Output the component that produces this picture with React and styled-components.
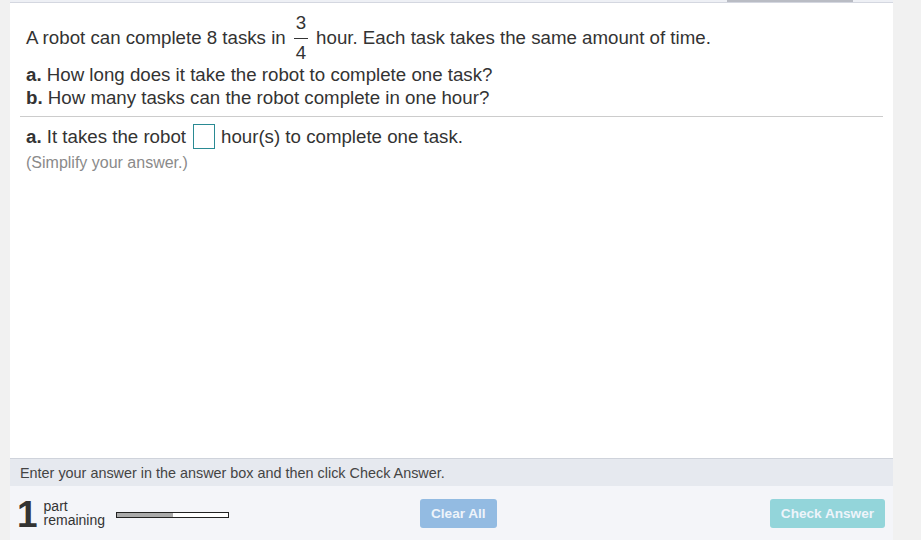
import React from 'react';
import styled, { createGlobalStyle } from 'styled-components';

const GlobalStyle = createGlobalStyle`
  body {
    margin: 0;
    background: #f2f2f2;
    font-family: 'Liberation Sans', Arial, sans-serif;
    color: #333;
  }
`;

const Page = styled.div`
  display: flex;
  height: 540px;
  width: 921px;
  overflow: hidden;
`;

const SideStrip = styled.div`
  width: ${p => p.$w}px;
  flex-shrink: 0;
  background: #f1f1f1;
`;

const Main = styled.div`
  width: 883px;
  display: flex;
  flex-direction: column;
  background: #fff;
`;

const TopBar = styled.div`
  height: 2px;
  background: #eef0f5;
  border-bottom: 1px solid #d4d7e0;
  display: flex;
  justify-content: flex-end;
  padding-right: 40px;
`;

const Tab = styled.div`
  width: 126px;
  height: 2px;
  background: #b9bcc4;
`;

const Content = styled.div`
  flex: 1;
  padding: 10px 10px 0 10px;
  font-size: 18.7px;
`;

const Question = styled.div`
  padding: 0 6px 7px;
`;

const Stem = styled.div`
  display: flex;
  align-items: center;
  height: 50px;
`;

const Frac = styled.span`
  display: inline-flex;
  flex-direction: column;
  align-items: center;
  margin: 0 8px;
  line-height: 22px;
  & > span:first-child {
    border-bottom: 1px solid #333;
    padding: 0 2px 4px;
    margin-bottom: 3px;
  }
`;

const Line = styled.div`
  line-height: 23px;
`;

const Part = styled.b`
  font-weight: 700;
`;

const Divider = styled.hr`
  border: 0;
  border-top: 1px solid #ccc;
  margin: 0;
`;

const Answer = styled.div`
  padding: 6px 6px 0;
`;

const AnswerLine = styled.div`
  display: flex;
  align-items: center;
  height: 27px;
`;

const Box = styled.span`
  display: inline-block;
  width: 20px;
  height: 23px;
  border: 1px solid #2a8a93;
  margin: 0 6px 0 7px;
`;

const Hint = styled.div`
  color: #8a8a8a;
  font-size: 16px;
  margin-top: 4px;
`;

const Instruction = styled.div`
  height: 27px;
  border-top: 1px solid #cfd3db;
  background: #e6e9ef;
  font-size: 14.4px;
  color: #444;
  display: flex;
  align-items: center;
  padding-left: 10px;
`;

const Footer = styled.div`
  height: 54px;
  background: #f4f5f9;
  display: flex;
  align-items: center;
  padding: 0 8px 0 7px;
`;

const Remaining = styled.div`
  display: flex;
  align-items: center;
  width: 403px;
`;

const Count = styled.span`
  font-size: 37px;
  font-weight: 700;
  color: #333;
  line-height: 1;
  margin-right: 6px;
  margin-top: 3px;
`;

const Label = styled.span`
  display: flex;
  flex-direction: column;
  font-size: 14px;
  line-height: 14.5px;
  color: #333;
  white-space: nowrap;
`;

const Progress = styled.div`
  width: 111px;
  height: 4px;
  border: 1px solid #222;
  background: #fff;
  margin-left: 11px;
  margin-top: 3px;
`;

const Fill = styled.div`
  height: 100%;
  background: #aaa;
`;

const Button = styled.button`
  border: 0;
  border-radius: 3px;
  height: 29px;
  padding: 0 11px;
  font-family: 'Liberation Sans', Arial, sans-serif;
  font-size: 13.6px;
  font-weight: 700;
  color: #eef4fa;
  background: ${p => p.$bg};
`;

const Spacer = styled.div`
  flex: 1;
`;

export default function App() {
  return (
    <Page>
      <GlobalStyle />
      <SideStrip $w={10} />
      <Main>
        <TopBar><Tab /></TopBar>
        <Content>
          <Question>
            <Stem>
              A robot can complete 8 tasks in
              <Frac><span>3</span><span>4</span></Frac>
              hour. Each task takes the same amount of time.
            </Stem>
            <Line><Part>a.</Part> How long does it take the robot to complete one task?</Line>
            <Line><Part>b.</Part> How many tasks can the robot complete in one hour?</Line>
          </Question>
          <Divider />
          <Answer>
            <AnswerLine>
              <Part>a.</Part>&nbsp;It takes the robot
              <Box />
              hour(s) to complete one task.
            </AnswerLine>
            <Hint>(Simplify your answer.)</Hint>
          </Answer>
        </Content>
        <Instruction>Enter your answer in the answer box and then click Check Answer.</Instruction>
        <Footer>
          <Remaining>
            <Count>1</Count>
            <Label><span>part</span><span>remaining</span></Label>
            <Progress><Fill style={{ width: '50%' }} /></Progress>
          </Remaining>
          <Button $bg="#93bbe2">Clear All</Button>
          <Spacer />
          <Button $bg="#93d5da">Check Answer</Button>
        </Footer>
      </Main>
      <SideStrip $w={28} />
    </Page>
  );
}
